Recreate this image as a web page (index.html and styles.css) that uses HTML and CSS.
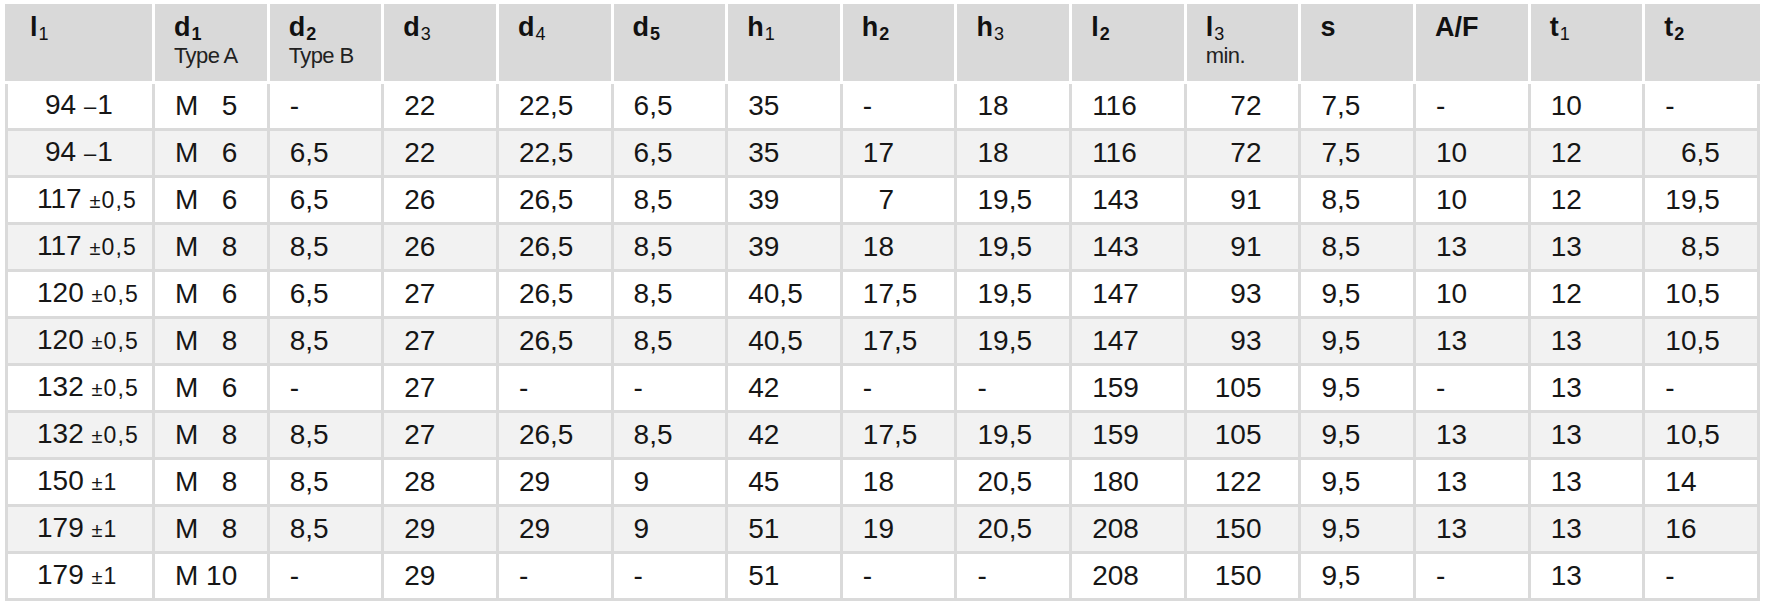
FILE: index.html
```html
<!DOCTYPE html>
<html>
<head>
<meta charset="utf-8">
<link rel="stylesheet" href="styles.css">
</head>
<body>
<table class="spec">
  <colgroup>
    <col class="c-first">
    <col><col><col><col><col><col><col><col><col><col><col><col><col><col>
  </colgroup>
  <thead>
    <tr>
      <th>l<sub>1</sub></th>
      <th>d<sub class="b">1</sub><span class="note">Type A</span></th>
      <th>d<sub class="b">2</sub><span class="note">Type B</span></th>
      <th>d<sub>3</sub></th>
      <th>d<sub>4</sub></th>
      <th>d<sub class="b">5</sub></th>
      <th>h<sub>1</sub></th>
      <th>h<sub class="b">2</sub></th>
      <th>h<sub>3</sub></th>
      <th>l<sub class="b">2</sub></th>
      <th>l<sub>3</sub><span class="note">min.</span></th>
      <th>s</th>
      <th>A/F</th>
      <th>t<sub>1</sub></th>
      <th>t<sub class="b">2</sub></th>
    </tr>
  </thead>
  <tbody>
    <tr>
      <td class="l1"><span class="short">94</span> <span class="dash">–</span>1</td>
      <td>M <span class="n2">5</span></td><td>-</td><td>22</td><td>22,5</td><td>6,5</td><td>35</td><td>-</td><td>18</td><td>116</td><td class="l3"><span class="n3">72</span></td><td>7,5</td><td>-</td><td>10</td><td>-</td>
    </tr>
    <tr>
      <td class="l1"><span class="short">94</span> <span class="dash">–</span>1</td>
      <td>M <span class="n2">6</span></td><td>6,5</td><td>22</td><td>22,5</td><td>6,5</td><td>35</td><td>17</td><td>18</td><td>116</td><td class="l3"><span class="n3">72</span></td><td>7,5</td><td>10</td><td>12</td><td><span class="n2">6</span>,5</td>
    </tr>
    <tr>
      <td class="l1">117 <span class="tol"><span class="pm">±</span>0,5</span></td>
      <td>M <span class="n2">6</span></td><td>6,5</td><td>26</td><td>26,5</td><td>8,5</td><td>39</td><td><span class="n2">7</span></td><td>19,5</td><td>143</td><td class="l3"><span class="n3">91</span></td><td>8,5</td><td>10</td><td>12</td><td>19,5</td>
    </tr>
    <tr>
      <td class="l1">117 <span class="tol"><span class="pm">±</span>0,5</span></td>
      <td>M <span class="n2">8</span></td><td>8,5</td><td>26</td><td>26,5</td><td>8,5</td><td>39</td><td>18</td><td>19,5</td><td>143</td><td class="l3"><span class="n3">91</span></td><td>8,5</td><td>13</td><td>13</td><td><span class="n2">8</span>,5</td>
    </tr>
    <tr>
      <td class="l1">120 <span class="tol"><span class="pm">±</span>0,5</span></td>
      <td>M <span class="n2">6</span></td><td>6,5</td><td>27</td><td>26,5</td><td>8,5</td><td>40,5</td><td>17,5</td><td>19,5</td><td>147</td><td class="l3"><span class="n3">93</span></td><td>9,5</td><td>10</td><td>12</td><td>10,5</td>
    </tr>
    <tr>
      <td class="l1">120 <span class="tol"><span class="pm">±</span>0,5</span></td>
      <td>M <span class="n2">8</span></td><td>8,5</td><td>27</td><td>26,5</td><td>8,5</td><td>40,5</td><td>17,5</td><td>19,5</td><td>147</td><td class="l3"><span class="n3">93</span></td><td>9,5</td><td>13</td><td>13</td><td>10,5</td>
    </tr>
    <tr>
      <td class="l1">132 <span class="tol"><span class="pm">±</span>0,5</span></td>
      <td>M <span class="n2">6</span></td><td>-</td><td>27</td><td>-</td><td>-</td><td>42</td><td>-</td><td>-</td><td>159</td><td class="l3"><span class="n3">105</span></td><td>9,5</td><td>-</td><td>13</td><td>-</td>
    </tr>
    <tr>
      <td class="l1">132 <span class="tol"><span class="pm">±</span>0,5</span></td>
      <td>M <span class="n2">8</span></td><td>8,5</td><td>27</td><td>26,5</td><td>8,5</td><td>42</td><td>17,5</td><td>19,5</td><td>159</td><td class="l3"><span class="n3">105</span></td><td>9,5</td><td>13</td><td>13</td><td>10,5</td>
    </tr>
    <tr>
      <td class="l1">150 <span class="tol"><span class="pm">±</span>1</span></td>
      <td>M <span class="n2">8</span></td><td>8,5</td><td>28</td><td>29</td><td>9</td><td>45</td><td>18</td><td>20,5</td><td>180</td><td class="l3"><span class="n3">122</span></td><td>9,5</td><td>13</td><td>13</td><td>14</td>
    </tr>
    <tr>
      <td class="l1">179 <span class="tol"><span class="pm">±</span>1</span></td>
      <td>M <span class="n2">8</span></td><td>8,5</td><td>29</td><td>29</td><td>9</td><td>51</td><td>19</td><td>20,5</td><td>208</td><td class="l3"><span class="n3">150</span></td><td>9,5</td><td>13</td><td>13</td><td>16</td>
    </tr>
    <tr>
      <td class="l1">179 <span class="tol"><span class="pm">±</span>1</span></td>
      <td>M <span class="n2">10</span></td><td>-</td><td>29</td><td>-</td><td>-</td><td>51</td><td>-</td><td>-</td><td>208</td><td class="l3"><span class="n3">150</span></td><td>9,5</td><td>-</td><td>13</td><td>-</td>
    </tr>
  </tbody>
</table>
</body>
</html>
```

FILE: styles.css
```css
html, body {
  margin: 0;
  padding: 0;
  background: #ffffff;
}

body {
  padding: 4px 6px 0 5px;
  font-family: "Liberation Sans", Arial, sans-serif;
  color: #161616;
}

.spec {
  width: 1755px;
  table-layout: fixed;
  border-collapse: separate;
  border-spacing: 0;
}

.c-first {
  width: 150px;
}

.spec th {
  box-sizing: border-box;
  height: 80px;
  background: #d9d9d9;
  border-right: 3px solid #ffffff;
  border-bottom: 3px solid #ffffff;
  padding: 7px 0 0 19px;
  vertical-align: top;
  text-align: left;
  font-size: 27px;
  font-weight: bold;
  line-height: 32px;
  color: #111;
}

.spec th:first-child {
  padding-left: 25px;
}

.spec th:last-child {
  border-right: 0;
}

.spec sub {
  font-size: 18px;
  font-weight: normal;
  vertical-align: -4px;
  line-height: 0;
  margin-left: 1px;
}

.spec sub.b {
  font-weight: bold;
}

.note {
  display: block;
  font-weight: normal;
  font-size: 22px;
  line-height: 25px;
  margin-top: 0;
  letter-spacing: -0.6px;
  color: #222;
}

.spec td {
  box-sizing: border-box;
  height: 47px;
  padding: 0 0 0 20px;
  border-right: 3px solid #dadada;
  border-bottom: 3px solid #dadada;
  font-size: 28px;
  line-height: 32px;
  vertical-align: middle;
  white-space: nowrap;
  background: #ffffff;
}

.spec td:first-child {
  border-left: 3px solid #dadada;
  padding-left: 29px;
}

.spec tbody tr:nth-child(even) td {
  background: #f2f2f2;
}

.spec td.l3 {
  padding-left: 28px;
}

.short {
  margin-left: 8px;
}

.n3 {
  display: inline-block;
  width: 3ch;
  text-align: right;
}

.n2 {
  display: inline-block;
  width: 2ch;
  text-align: right;
}

.tol {
  font-size: 23px;
  letter-spacing: 1.2px;
}

.pm {
  font-size: 20px;
  letter-spacing: 1px;
}

.dash {
  font-size: 22px;
  letter-spacing: 1px;
}
```
